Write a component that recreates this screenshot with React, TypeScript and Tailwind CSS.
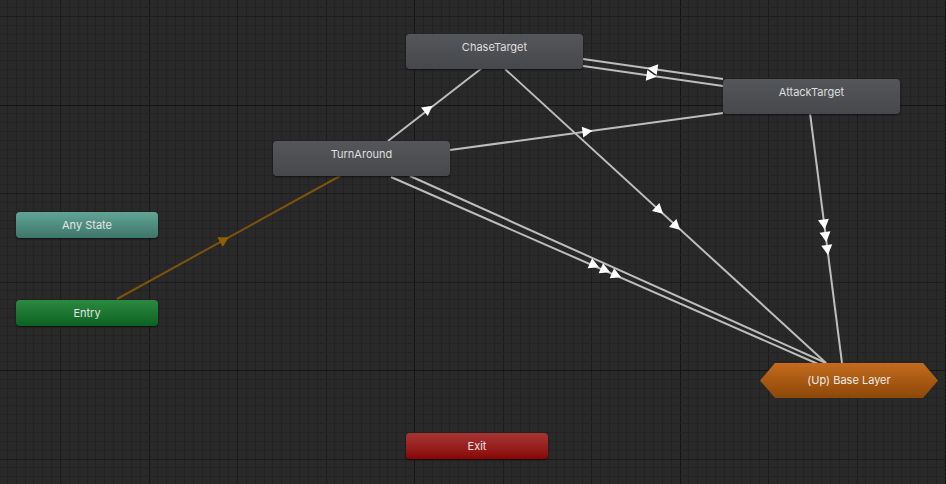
import React from "react";

type Pt = [number, number];

type Edge = {
  from: Pt;
  to: Pt;
  arrows: { at: Pt; back?: boolean }[];
  color?: string;
  arrowColor?: string;
};

const edges: Edge[] = [
  // TurnAround -> ChaseTarget
  { from: [388, 141], to: [482, 68], arrows: [{ at: [428, 109] }] },
  // ChaseTarget <-> AttackTarget
  { from: [583, 59], to: [723, 79], arrows: [{ at: [653, 69], back: true }] },
  { from: [583, 66], to: [723, 86], arrows: [{ at: [651, 76] }] },
  // TurnAround -> AttackTarget
  { from: [450, 150], to: [723, 113], arrows: [{ at: [587, 131.5] }] },
  // ChaseTarget -> Base Layer
  { from: [505, 69], to: [826, 363], arrows: [{ at: [659, 210] }, { at: [676, 226] }] },
  // AttackTarget -> Base Layer
  {
    from: [810, 113],
    to: [842, 363],
    arrows: [{ at: [824, 224] }, { at: [825.6, 236.5] }, { at: [827.3, 249.5] }],
  },
  // TurnAround -> Base Layer
  { from: [410, 176], to: [826, 363], arrows: [] },
  {
    from: [391, 177],
    to: [818, 364],
    arrows: [{ at: [594, 265] }, { at: [605, 270] }, { at: [616, 275] }],
  },
  // Entry -> TurnAround
  {
    from: [117, 299],
    to: [340, 176],
    arrows: [{ at: [224, 240] }],
    color: "#7d530c",
    arrowColor: "#8f5f04",
  },
];

function arrowPoints(at: Pt, from: Pt, to: Pt, back?: boolean) {
  let dx = to[0] - from[0];
  let dy = to[1] - from[1];
  const len = Math.hypot(dx, dy);
  dx /= len;
  dy /= len;
  if (back) {
    dx = -dx;
    dy = -dy;
  }
  const [cx, cy] = at;
  const tip: Pt = [cx + dx * 5.5, cy + dy * 5.5];
  const bx = cx - dx * 4.5;
  const by = cy - dy * 4.5;
  const a: Pt = [bx - dy * 5.5, by + dx * 5.5];
  const b: Pt = [bx + dy * 5.5, by - dx * 5.5];
  return [tip, a, b].map((p) => p.join(",")).join(" ");
}

// minor every 8.85px, medium every 10 minor, major every 30 minor
function lineColor(i: number, majorOffset: number) {
  if ((((i - majorOffset) % 30) + 30) % 30 === 0) return "#151515";
  if (i % 10 === 0) return "#1c1c1c";
  return "#232323";
}

function Grid() {
  const step = 8.85;
  const xs: { p: number; c: string }[] = [];
  const ys: { p: number; c: string }[] = [];
  for (let i = -10; i < 120; i++) {
    const p = 60 + i * step;
    if (p >= -1 && p <= 947) xs.push({ p: Math.round(p), c: lineColor(i, 10) });
  }
  for (let j = -10; j < 70; j++) {
    const p = 16 + j * step;
    if (p >= -1 && p <= 485) ys.push({ p: Math.round(p), c: lineColor(j, 10) });
  }
  return (
    <svg className="absolute inset-0" width={946} height={484}>
      {xs.map((l, i) => (
        <rect key={"x" + i} x={l.p} y={0} width={1} height={484} fill={l.c} />
      ))}
      {ys.map((l, i) => (
        <rect key={"y" + i} x={0} y={l.p} width={946} height={1} fill={l.c} />
      ))}
    </svg>
  );
}

function Edges() {
  return (
    <svg className="absolute inset-0" width={946} height={484}>
      {edges.map((e, i) => (
        <g key={i}>
          <line
            x1={e.from[0]}
            y1={e.from[1]}
            x2={e.to[0]}
            y2={e.to[1]}
            stroke={e.color ?? "#bdbdbd"}
            strokeWidth={2}
          />
          {e.arrows.map((a, k) => (
            <polygon key={k} points={arrowPoints(a.at, e.from, e.to, a.back)} fill={e.arrowColor ?? "#ffffff"} />
          ))}
        </g>
      ))}
    </svg>
  );
}

function StateNode({ label, className }: { label: string; className: string }) {
  return (
    <div
      className={
        "absolute w-[177px] h-[35px] rounded-[4px] bg-gradient-to-b from-[#55565a] to-[#47484c] shadow-[0_1px_2px_rgba(0,0,0,0.6)] text-center pt-[6px] text-[11px] leading-[14px] text-[#dedede] " +
        className
      }
    >
      {label}
    </div>
  );
}

export default function App() {
  return (
    <div className="relative w-[946px] h-[484px] overflow-hidden bg-[#292929] font-['Inter',sans-serif]">
      <Grid />
      <Edges />

      <StateNode label="ChaseTarget" className="left-[406px] top-[34px]" />
      <StateNode label="AttackTarget" className="left-[723px] top-[79px]" />
      <StateNode label="TurnAround" className="left-[273px] top-[141px]" />

      <div className="absolute left-[16px] top-[212px] w-[142px] h-[26px] rounded-[4px] bg-gradient-to-b from-[#62a594] to-[#3d766a] shadow-[0_1px_2px_rgba(0,0,0,0.6)] flex items-center justify-center text-[11px] text-[#e4e4e4]">
        Any State
      </div>
      <div className="absolute left-[16px] top-[300px] w-[142px] h-[26px] rounded-[4px] bg-gradient-to-b from-[#2c8a40] to-[#0a6222] shadow-[0_1px_2px_rgba(0,0,0,0.6)] flex items-center justify-center text-[11px] text-[#e4e4e4]">
        Entry
      </div>
      <div className="absolute left-[406px] top-[433px] w-[142px] h-[26px] rounded-[4px] bg-gradient-to-b from-[#a63434] to-[#8a0303] shadow-[0_1px_2px_rgba(0,0,0,0.6)] flex items-center justify-center text-[11px] text-[#e4e4e4]">
        Exit
      </div>

      <div className="absolute left-[760px] top-[363px] w-[178px] h-[35px] bg-gradient-to-b from-[#c46b1c] to-[#8c4808] [clip-path:polygon(15px_0,calc(100%_-_15px)_0,100%_50%,calc(100%_-_15px)_100%,15px_100%,0_50%)] flex items-center justify-center text-[11px] text-[#ececec]">
        (Up) Base Layer
      </div>
    </div>
  );
}
